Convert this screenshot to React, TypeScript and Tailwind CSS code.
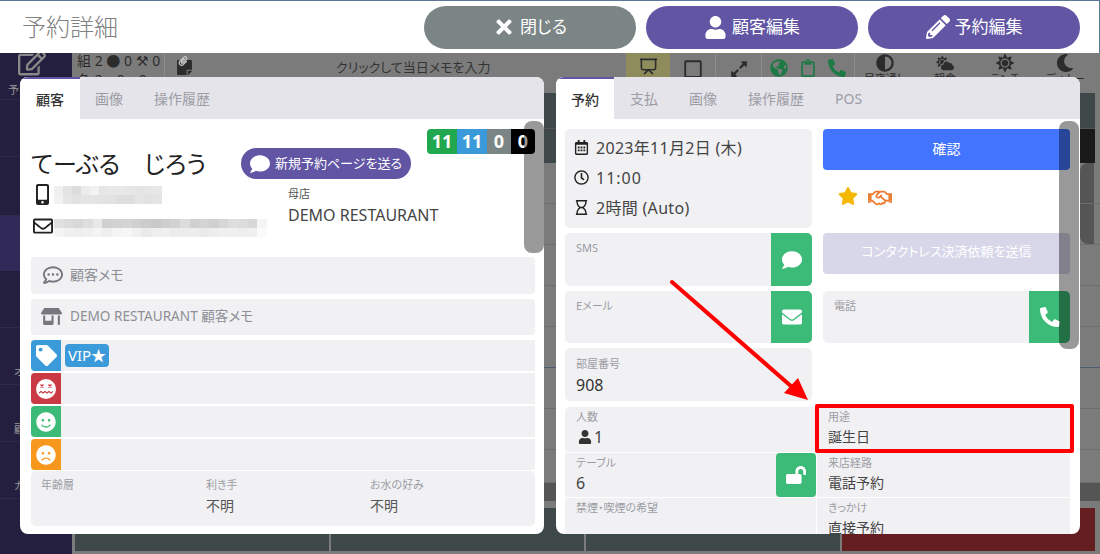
import type { ReactNode } from "react";
import {
  FaTimes,
  FaUser,
  FaPencilAlt,
  FaComment,
  FaMobileAlt,
  FaRegEnvelope,
  FaRegCommentDots,
  FaStoreAlt,
  FaTag,
  FaSmile,
  FaFrown,
  FaRegCalendarAlt,
  FaRegClock,
  FaRegHourglass,
  FaEnvelope,
  FaPhoneAlt,
  FaLockOpen,
  FaStar,
  FaRegHandshake,
  FaGlobeAmericas,
  FaRegClipboard,
  FaExpandAlt,
  FaRegSquare,
  FaAdjust,
  FaSun,
  FaMoon,
  FaRegEdit,
  FaStickyNote,
  FaPaperclip,
  FaCloudSun,
} from "react-icons/fa";
import { Presentation } from "lucide-react";

const PHONE_BLUR = [
  ["#f0f0f0", "#e4e4e4", "#dcdcdc", "#ececec", "#f2f2f2", "#e6e6e6", "#e8e8e8", "#e8e8e8", "#e6e6e6", "#e4e4e4", "#e6e6e6", "#e8e8e8"],
  ["#f2f2f2", "#e6e6e6", "#e2e2e2", "#e4e4e4", "#e4e4e4", "#e2e2e2", "#e2e2e2", "#dedede", "#dedede", "#e4e4e4", "#e2e2e2", "#e4e4e4"],
];

const MAIL_BLUR = [
  ["#e0e0e0", "#dcdcdc", "#d8d8d8", "#dedede", "#e8e8e8", "#d0d0d0", "#d2d2d2", "#d4d4d4", "#d0d0d0", "#cccccc", "#c8c8c8", "#cecece", "#d2d2d2", "#dcdcdc", "#d0d0d0", "#d4d4d4", "#d0d0d0", "#d6d6d6", "#dedede", "#dcdcdc", "#d8d8d8", "#f4f4f4"],
  ["#f4f4f4", "#f0f0f0", "#eeeeee", "#f0f0f0", "#f4f4f4", "#eeeeee", "#f4f4f4", "#f6f6f6", "#f0f0f0", "#eaeaea", "#eeeeee", "#f0f0f0", "#ececec", "#ececec", "#eeeeee", "#eaeaea", "#eeeeee", "#f0f0f0", "#f0f0f0", "#eeeeee", "#f0f0f0", "#fafafa"],
];

function Mosaic({ rows, cell }: { rows: string[][]; cell: string }) {
  return (
    <div className="flex flex-col">
      {rows.map((row, i) => (
        <div key={i} className="flex">
          {row.map((c, j) => (
            <div key={j} className={cell} style={{ backgroundColor: c }} />
          ))}
        </div>
      ))}
    </div>
  );
}

function DizzyIcon() {
  return (
    <svg width="20" height="20" viewBox="0 0 20 20">
      <circle cx="10" cy="10" r="10" fill="#fff" />
      <path d="M4.5 5.5l3 3M7.5 5.5l-3 3M12.5 5.5l3 3M15.5 5.5l-3 3" stroke="#c93a44" strokeWidth="1.4" />
      <path d="M3 14l2-1.6 2 1.6 2-1.6 2 1.6 2-1.6 2 1.6 2-1.6" stroke="#c93a44" strokeWidth="1.2" fill="none" />
    </svg>
  );
}

function HeaderButton({ icon, label, gray }: { icon: ReactNode; label: string; gray?: boolean }) {
  return (
    <button
      className={`flex h-[43px] w-[212px] items-center justify-center gap-[5px] rounded-[22px] text-[17px] text-white ${
        gray ? "bg-[#7b8586]" : "bg-[#6155a4]"
      }`}
    >
      {icon}
      {label}
    </button>
  );
}

function Tabs({ active, items, activeWidth, offset }: { active: string; items: string[]; activeWidth: string; offset: string }) {
  return (
    <div className="flex h-[42px] shrink-0 items-center bg-[#e5e4ea] text-[14px] text-[#9c9ca4]">
      <div className={`flex h-full items-center justify-center border-t-2 border-[#6155a4] bg-white font-medium text-[#333] ${activeWidth}`}>
        {active}
      </div>
      <div className={`flex gap-[31px] ${offset}`}>
        {items.map((t) => (
          <span key={t}>{t}</span>
        ))}
      </div>
    </div>
  );
}

function TagRow({ color, icon, children }: { color: string; icon: ReactNode; children?: ReactNode }) {
  return (
    <div className="flex h-[31px] items-center bg-[#f1f1f3]">
      <div className={`flex h-full w-[30px] shrink-0 items-center justify-center rounded-l-[4px] text-white ${color}`}>{icon}</div>
      {children}
    </div>
  );
}

function ContactBox({ label, height, icon }: { label: string; height: string; icon: ReactNode }) {
  return (
    <div className={`flex overflow-hidden rounded-[5px] bg-[#f1f1f3] ${height}`}>
      <div className="flex-1 pl-[11px] pt-[7px] text-[11px] leading-[16px] text-[#9c9ca4]">{label}</div>
      <div className="flex w-[41px] items-center justify-center bg-[#3bbb77] text-[20px] text-white">{icon}</div>
    </div>
  );
}

function InfoCell({ label, value, children, height }: { label: string; value?: ReactNode; children?: ReactNode; height: string }) {
  return (
    <div className={`flex overflow-hidden bg-[#f1f1f3] ${height}`}>
      <div className="flex-1 pl-[11px] pt-[2px]">
        <div className="text-[11px] leading-[16px] text-[#9c9ca4]">{label}</div>
        <div className="mt-[2px] text-[14px] leading-[20px] text-[#444]">{value}</div>
      </div>
      {children}
    </div>
  );
}

function CustomerPanel() {
  return (
    <div className="relative flex w-[524px] flex-col overflow-hidden rounded-lg bg-white">
      <Tabs active="顧客" items={["画像", "操作履歴"]} activeWidth="w-[60px]" offset="ml-[15px]" />
      <div className="flex flex-col pl-[11px] pr-[9px] pt-[10px]">
        <div className="flex h-[50px] items-start justify-between">
          <div className="mt-[19px] flex items-center">
            <span className="w-[210px] shrink-0 whitespace-nowrap text-[24px] leading-[31px] text-[#222] [word-spacing:7px]">てーぶる　じろう</span>
            <button className="flex h-[31px] w-[170px] items-center justify-center gap-[5px] rounded-full bg-[#6155a4] text-[13px] text-white">
              <FaComment className="text-[20px]" />
              新規予約ページを送る
            </button>
          </div>
          <div className="flex h-[25px] overflow-hidden rounded-[4px] text-[18px] font-bold leading-[25px] text-white">
            <span className="w-[30px] bg-[#21a84f] text-center">11</span>
            <span className="w-[30px] bg-[#3b9ad9] text-center">11</span>
            <span className="w-[24px] bg-[#7b8586] text-center">0</span>
            <span className="w-[24px] bg-black text-center">0</span>
          </div>
        </div>
        <div className="flex h-[78px]">
          <div className="w-[257px] pt-[5px]">
            <div className="flex items-center">
              <FaMobileAlt className="ml-[5px] h-[21px] w-[13px] text-[#222]" />
              <div className="ml-[5px]">
                <Mosaic rows={PHONE_BLUR} cell="h-[9px] w-[9px]" />
              </div>
            </div>
            <div className="mt-[11px] flex items-start">
              <FaRegEnvelope className="ml-[2px] text-[20px] text-[#222]" />
              <div className="ml-[1px] mt-[3px]">
                <Mosaic rows={MAIL_BLUR} cell="h-[9px] w-[9.7px]" />
              </div>
            </div>
          </div>
          <div className="pt-[7px]">
            <div className="text-[11px] leading-[16px] text-[#555]">母店</div>
            <div className="mt-[3px] text-[16px] leading-[20px] text-[#444]">DEMO RESTAURANT</div>
          </div>
        </div>
        <div className="flex h-[37px] items-center rounded-[4px] bg-[#f1f1f3] pb-[2px] pl-[12px] text-[14px] text-[#8e8e96]">
          <FaRegCommentDots className="text-[20px] text-[#777780]" />
          <span className="ml-[7px]">顧客メモ</span>
        </div>
        <div className="mt-[5px] flex h-[36px] items-center rounded-[4px] bg-[#f1f1f3] pb-[2px] pl-[10px] text-[14px] text-[#8e8e96]">
          <FaStoreAlt className="text-[21px] text-[#777780]" />
          <span className="ml-[8px] text-[13.6px]">DEMO RESTAURANT 顧客メモ</span>
        </div>
        <div className="mt-[5px] flex flex-col gap-[2px]">
          <TagRow color="bg-[#3b9ad9]" icon={<FaTag className="text-[21px]" />}>
            <span className="ml-[4px] flex h-[23px] w-[44px] items-center justify-center rounded-[4px] bg-[#3b9ad9] text-[15px] text-white">VIP★</span>
          </TagRow>
          <TagRow color="bg-[#c93a44]" icon={<DizzyIcon />} />
          <TagRow color="bg-[#3bbb77]" icon={<FaSmile className="text-[20px]" />} />
          <TagRow color="bg-[#f7971e]" icon={<FaFrown className="text-[20px]" />} />
        </div>
        <div className="mt-[1px] grid h-[55px] grid-cols-[165px_164px_1fr] rounded-[5px] bg-[#f1f1f3] pl-[10px] pt-[6px] text-[11px] leading-[16px] text-[#9c9ca4]">
          <span>年齢層</span>
          <div>
            <div>利き手</div>
            <div className="mt-[3px] text-[14px] leading-[20px] text-[#555]">不明</div>
          </div>
          <div>
            <div>お水の好み</div>
            <div className="mt-[3px] text-[14px] leading-[20px] text-[#555]">不明</div>
          </div>
        </div>
      </div>
      <div className="absolute right-0 top-[44px] h-[132px] w-[20px] rounded-lg bg-black/40" />
    </div>
  );
}

function ReservationPanel() {
  return (
    <div className="relative flex w-[524px] flex-col overflow-hidden rounded-lg bg-white">
      <Tabs active="予約" items={["支払", "画像", "操作履歴", "POS"]} activeWidth="w-[58px]" offset="ml-[16px]" />
      <div className="flex flex-col pl-[9px] pr-[10px] pt-[10px]">
        <div className="flex gap-[11px]">
          <div className="flex w-[247px] flex-col gap-[5px]">
            <div className="flex h-[99px] flex-col justify-center gap-[10px] rounded-[5px] bg-[#f1f1f3] pb-[2px] pl-[9px] text-[16px] leading-[20px] tracking-[0.3px] text-[#444]">
              <div className="flex items-center gap-[7px]">
                <FaRegCalendarAlt className="w-[15px] text-[15px] text-[#222]" />
                2023年11月2日 (木)
              </div>
              <div className="flex items-center gap-[7px]">
                <FaRegClock className="w-[15px] text-[15px] text-[#222]" />
                <span className="tracking-[1px]">11:00</span>
              </div>
              <div className="flex items-center gap-[7px]">
                <FaRegHourglass className="w-[15px] text-[15px] text-[#222]" />
                2時間 (Auto)
              </div>
            </div>
            <ContactBox label="SMS" height="h-[53px]" icon={<FaComment />} />
            <ContactBox label="Eメール" height="h-[52px]" icon={<FaEnvelope />} />
            <div className="h-[53px] rounded-[5px] bg-[#f1f1f3] pl-[11px] pt-[8px]">
              <div className="text-[11px] leading-[16px] text-[#9c9ca4]">部屋番号</div>
              <div className="mt-[3px] text-[16px] leading-[20px] text-[#333]">908</div>
            </div>
          </div>
          <div className="flex w-[247px] flex-col">
            <button className="h-[41px] rounded-[4px] bg-[#4274ff] pb-[3px] text-[14px] text-white">確認</button>
            <div className="flex h-[63px] items-start gap-[10px] pl-[15px] pt-[16px]">
              <FaStar className="text-[20px] text-[#f4b800]" />
              <FaRegHandshake className="text-[24px] text-[#ee7d31]" />
            </div>
            <button className="h-[41px] rounded-[4px] bg-[#d8d6e9] pb-[3px] text-[13px] text-white">コンタクトレス決済依頼を送信</button>
            <div className="mt-[17px]">
              <ContactBox label="電話" height="h-[52px]" icon={<FaPhoneAlt />} />
            </div>
          </div>
        </div>
        <div className="mt-[6px] grid grid-cols-[251px_253px] gap-[1px]">
          <InfoCell
            label="人数"
            height="h-[45px] rounded-tl-[5px]"
            value={
              <span className="flex items-center gap-[2px] text-[16px]">
                <FaUser className="ml-[2px] text-[14px] text-[#333]" />1
              </span>
            }
          />
          <InfoCell label="用途" value="誕生日" height="h-[45px]" />
          <InfoCell label="テーブル" value={<span className="text-[16px]">6</span>} height="h-[44px]">
            <div className="flex w-[40px] items-center justify-center rounded-[4px] bg-[#3bbb77] text-[20px] text-white">
              <FaLockOpen />
            </div>
          </InfoCell>
          <InfoCell label="来店経路" value="電話予約" height="h-[44px]" />
          <InfoCell label="禁煙・喫煙の希望" height="h-[40px]" />
          <InfoCell label="きっかけ" value="直接予約" height="h-[40px]" />
        </div>
      </div>
      <div className="absolute right-[1px] top-[44px] h-[228px] w-[20px] rounded-lg bg-black/40" />
    </div>
  );
}

function BackdropToolbar() {
  return (
    <div className="flex h-[40px] shrink-0 items-start overflow-hidden bg-[#7b7b7b] text-[#2c2c2c]">
      <div className="flex h-full w-[93px] flex-col border-r border-[#8e8e8e] pl-[5px] text-[14px] leading-[16px]">
        <span>組 2 ● 0 ⚒ 0</span>
        <span className="mt-[3px]">名 2　0　0</span>
      </div>
      <div className="flex w-[461px] items-start pl-[11px] pt-[6px]">
        <div className="relative text-[17px]">
          <FaStickyNote />
          <FaPaperclip className="absolute left-[2px] top-[-3px] text-[10px] text-[#ccc]" />
        </div>
        <span className="ml-[143px] text-[13px] leading-[16px] text-[#333]">クリックして当日メモを入力</span>
      </div>
      <div className="flex h-full w-[44px] justify-center bg-[#8e8c5c] pt-[4px]">
        <Presentation size={19} />
      </div>
      <div className="flex h-full w-[46px] justify-center border-r border-[#8e8e8e] pt-[6px] text-[20px]">
        <FaRegSquare />
      </div>
      <div className="flex h-full w-[46px] justify-center border-r border-[#8e8e8e] pt-[7px] text-[18px]">
        <FaExpandAlt />
      </div>
      <div className="flex h-full w-[93px] justify-center gap-[11px] border-r border-[#8e8e8e] pt-[6px] text-[18px] text-[#1d7a45]">
        <FaGlobeAmericas />
        <FaRegClipboard />
        <FaPhoneAlt />
      </div>
      {[
        { label: "昼夜通し", icon: <FaAdjust /> },
        { label: "朝食", icon: <FaCloudSun /> },
        { label: "ランチ", icon: <FaSun /> },
        { label: "ディナー", icon: <FaMoon /> },
      ].map((m) => (
        <div key={m.label} className="flex w-[60px] flex-col items-center pt-[1px] text-[18px]">
          {m.icon}
          <span className="mt-[1px] text-[11px] leading-[12px]">{m.label}</span>
        </div>
      ))}
    </div>
  );
}

function Backdrop() {
  return (
    <div className="flex h-full">
      <div className="flex w-[72px] shrink-0 flex-col overflow-hidden bg-[#241f3f] text-[#999]">
        <div className="flex h-[47px] flex-col items-start border-b border-[#2f2a4c] pl-[18px] text-[11px]">
          <FaRegEdit className="mt-[-4px] text-[28px] text-[#888]" />
          <span className="ml-[-10px] mt-[5px]">予</span>
        </div>
        <div className="h-[57px] border-b border-[#2f2a4c]" />
        <div className="h-[59px] border-b border-[#2f2a4c]" />
        <div className="h-[55px] bg-[#312a58]" />
        <div className="h-[57px] border-b border-[#2f2a4c]" />
        <div className="h-[57px] border-b border-[#2f2a4c] pl-[14px] pt-[36px] text-[11px]">オ</div>
        <div className="h-[57px] border-b border-[#2f2a4c] pl-[14px] pt-[36px] text-[11px]">顧</div>
        <div className="h-[57px] border-b border-[#2f2a4c] pl-[14px] pt-[36px] text-[11px]">カ</div>
        <div className="flex-1 pl-[24px] pt-[2px] text-[12px] text-[#aaa]">支払</div>
      </div>
      <div className="flex min-w-0 flex-1 flex-col">
        <BackdropToolbar />
        <div className="h-[35px] shrink-0 bg-[#7b7b7b] pr-[5px]">
          <div className="h-full bg-[#3f4848]" />
        </div>
        <div className="h-[35px] shrink-0 bg-[#7b7b7b] pr-[5px]">
          <div className="flex h-full border-t border-[#555] bg-[#3f4848]">
            <div className="ml-auto w-[20px] bg-[#1a1a1a]" />
          </div>
        </div>
        {[0, 1].map((i) => (
          <div key={i} className="flex h-[41px] shrink-0 justify-end border-b border-[#6e6e6e] bg-[#7b7b7b] pr-[6px]">
            <div className={`h-full w-[14px] bg-[#555] ${i === 0 ? "rounded-tl-lg" : "rounded-bl-lg"}`} />
          </div>
        ))}
        {[41, 41, 41, 41, 41, 33].map((h, i) => (
          <div
            key={i}
            className={`shrink-0 border-b bg-[#7b7b7b] ${i === 2 ? "border-[#4f5a70]" : "border-[#6e6e6e]"} ${h === 33 ? "h-[33px]" : "h-[41px]"}`}
          />
        ))}
        <div className="h-[18px] shrink-0 bg-[#555]" />
        <div className="h-[7px] shrink-0 bg-[#7b7b7b]" />
        <div className="flex h-[47px] shrink-0 gap-[2px] bg-[#7b7b7b] pb-[4px] pl-[3px] pr-[5px]">
          <div className="flex-1 bg-[#3f4848]" />
          <div className="flex-1 bg-[#3f4848]" />
          <div className="flex-1 bg-[#3f4848]" />
          <div className="flex-1 bg-[#641e20]" />
        </div>
      </div>
    </div>
  );
}

export default function App() {
  return (
    <div className="relative flex h-[554px] w-[1100px] flex-col overflow-hidden font-['Noto_Sans','Noto_Sans_CJK_JP',sans-serif] [font-feature-settings:'palt']">
      <header className="flex h-[53px] shrink-0 items-center justify-between border-t border-r border-[#5d7598] bg-white pl-[22px] pr-[19px]">
        <h1 className="text-[24px] font-light text-[#808080]">予約詳細</h1>
        <div className="flex gap-[10px]">
          <HeaderButton gray label="閉じる" icon={<FaTimes className="text-[22px]" />} />
          <HeaderButton label="顧客編集" icon={<FaUser className="text-[23px]" />} />
          <HeaderButton label="予約編集" icon={<FaPencilAlt className="text-[24px]" />} />
        </div>
      </header>
      <div className="min-h-0 flex-1">
        <Backdrop />
      </div>

      <div className="absolute left-[20px] top-[77px] flex h-[457px] gap-[12px]">
        <CustomerPanel />
        <ReservationPanel />
      </div>

      {/* annotation drawn over the screenshot */}
      <div className="absolute left-[815px] top-[404px] h-[49px] w-[259px] rounded-[2px] border-[4px] border-[#f00]" />
      <svg className="absolute left-[660px] top-[270px]" width="160" height="140" viewBox="0 0 160 140">
        <path d="M12 12 L132 117" stroke="#f00" strokeWidth="4" strokeLinecap="round" fill="none" />
        <path d="M148 130 L124 123 L138 108 Z" fill="#f00" />
      </svg>
    </div>
  );
}
